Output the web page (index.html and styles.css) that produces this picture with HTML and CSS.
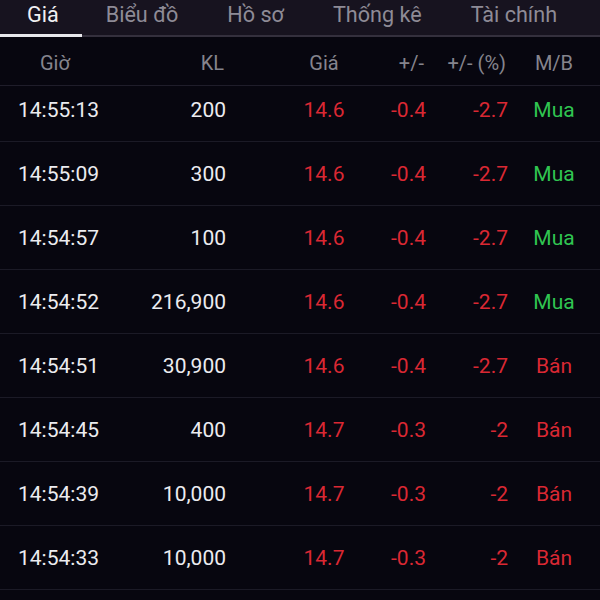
FILE: index.html
```html
<!DOCTYPE html>
<html lang="vi">

<head>
    <meta charset="UTF-8">
    <meta name="viewport" content="width=device-width, initial-scale=1.0">
    <title>Khớp lệnh</title>
    <link rel="stylesheet" href="styles.css">
</head>

<body>
    <div class="tabs">
        <div class="tab active">Giá</div>
        <div class="tab">Biểu đồ</div>
        <div class="tab">Hồ sơ</div>
        <div class="tab">Thống kê</div>
        <div class="tab">Tài chính</div>
    </div>

    <div class="table-head">
        <div class="cell c-time">Giờ</div>
        <div class="cell c-vol">KL</div>
        <div class="cell c-price">Giá</div>
        <div class="cell c-chg">+/-</div>
        <div class="cell c-pct">+/- (%)</div>
        <div class="cell c-side">M/B</div>
    </div>

    <div class="table-body">
        <div class="row">
            <div class="cell c-time">14:55:13</div>
            <div class="cell c-vol">200</div>
            <div class="cell c-price down">14.6</div>
            <div class="cell c-chg down">-0.4</div>
            <div class="cell c-pct down">-2.7</div>
            <div class="cell c-side buy">Mua</div>
        </div>
        <div class="row">
            <div class="cell c-time">14:55:09</div>
            <div class="cell c-vol">300</div>
            <div class="cell c-price down">14.6</div>
            <div class="cell c-chg down">-0.4</div>
            <div class="cell c-pct down">-2.7</div>
            <div class="cell c-side buy">Mua</div>
        </div>
        <div class="row">
            <div class="cell c-time">14:54:57</div>
            <div class="cell c-vol">100</div>
            <div class="cell c-price down">14.6</div>
            <div class="cell c-chg down">-0.4</div>
            <div class="cell c-pct down">-2.7</div>
            <div class="cell c-side buy">Mua</div>
        </div>
        <div class="row">
            <div class="cell c-time">14:54:52</div>
            <div class="cell c-vol">216,900</div>
            <div class="cell c-price down">14.6</div>
            <div class="cell c-chg down">-0.4</div>
            <div class="cell c-pct down">-2.7</div>
            <div class="cell c-side buy">Mua</div>
        </div>
        <div class="row">
            <div class="cell c-time">14:54:51</div>
            <div class="cell c-vol">30,900</div>
            <div class="cell c-price down">14.6</div>
            <div class="cell c-chg down">-0.4</div>
            <div class="cell c-pct down">-2.7</div>
            <div class="cell c-side sell">Bán</div>
        </div>
        <div class="row">
            <div class="cell c-time">14:54:45</div>
            <div class="cell c-vol">400</div>
            <div class="cell c-price down">14.7</div>
            <div class="cell c-chg down">-0.3</div>
            <div class="cell c-pct down">-2</div>
            <div class="cell c-side sell">Bán</div>
        </div>
        <div class="row">
            <div class="cell c-time">14:54:39</div>
            <div class="cell c-vol">10,000</div>
            <div class="cell c-price down">14.7</div>
            <div class="cell c-chg down">-0.3</div>
            <div class="cell c-pct down">-2</div>
            <div class="cell c-side sell">Bán</div>
        </div>
        <div class="row">
            <div class="cell c-time">14:54:33</div>
            <div class="cell c-vol">10,000</div>
            <div class="cell c-price down">14.7</div>
            <div class="cell c-chg down">-0.3</div>
            <div class="cell c-pct down">-2</div>
            <div class="cell c-side sell">Bán</div>
        </div>
    </div>
</body>

</html>
```

FILE: styles.css
```css
* {
    margin: 0;
    padding: 0;
    box-sizing: border-box;
}

body {
    font-family: Roboto, "Noto Sans", Arial, sans-serif;
    background-color: #07060f;
    color: #ececf0;
    width: 600px;
    height: 600px;
    overflow: hidden;
}

/* tab bar */
.tabs {
    display: flex;
    height: 37px;
    background-color: #17131f;
    border-bottom: 2px solid #34303d;
    white-space: nowrap;
}

.tab {
    display: flex;
    align-items: center;
    padding: 0 25px 6px 24px;
    margin-bottom: -2px;
    border-bottom: 3px solid transparent;
    font-size: 21.6px;
    color: #8e8b96;
}

.tab.active {
    color: #f0f0f2;
    border-bottom-color: #e8e8ec;
    padding: 0 23px 6px 27px;
}

/* table */
.table-head,
.row {
    display: grid;
    grid-template-columns: 120px 106px 160px 40px 82px 92px;
    align-items: center;
}

.table-head {
    height: 49px;
    padding-top: 3px;
    border-bottom: 1px solid #1f1d2a;
    font-size: 20px;
    color: #85848d;
}

.table-body {
    height: 514px;
    overflow: hidden;
}

.row {
    height: 64px;
    border-bottom: 1px solid #1b1a26;
    font-size: 21px;
}

.row:first-child {
    margin-top: -8px;
}

.cell {
    white-space: nowrap;
}

.c-time {
    padding-left: 18px;
}

.table-head .c-time {
    padding-left: 40px;
}

.c-vol {
    text-align: right;
}

.table-head .c-vol {
    padding-right: 2px;
}

.c-price {
    padding-left: 36px;
    text-align: center;
}

.c-chg,
.c-pct {
    text-align: right;
}

.table-head .c-chg,
.table-head .c-pct {
    padding-right: 2px;
}

.c-side {
    text-align: center;
}

.down {
    color: #da2833;
}

.sell {
    color: #da2833;
}

.buy {
    color: #30c451;
}
```
